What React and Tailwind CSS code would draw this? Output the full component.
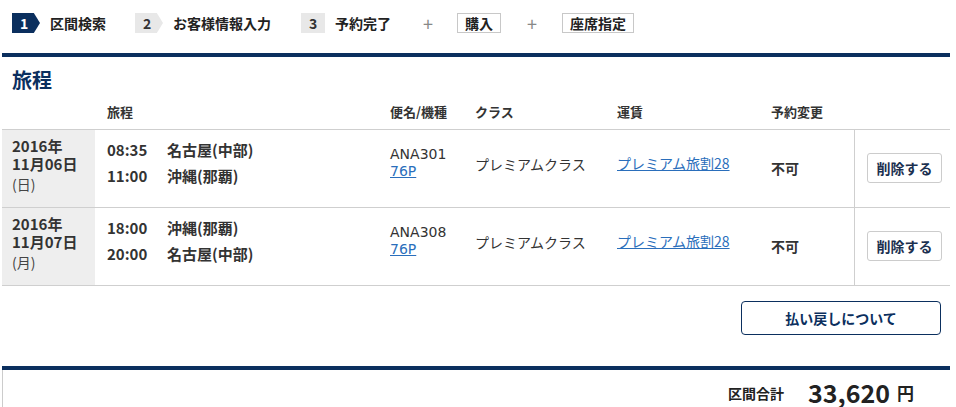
import React from 'react';

const ROWS = [
  {
    year: '2016年',
    date: '11月06日',
    dow: '(日)',
    legs: [
      ['08:35', '名古屋(中部)'],
      ['11:00', '沖縄(那覇)'],
    ],
    flight: 'ANA301',
  },
  {
    year: '2016年',
    date: '11月07日',
    dow: '(月)',
    legs: [
      ['18:00', '沖縄(那覇)'],
      ['20:00', '名古屋(中部)'],
    ],
    flight: 'ANA308',
  },
];

const GRID = 'grid grid-cols-[93px_295px_85px_142px_154px_83px_96px]';
const ARROW = '[clip-path:polygon(0_0,78%_0,100%_50%,78%_100%,0_100%)]';
const LATIN = "font-['DejaVu_Sans','Noto_Sans_CJK_JP',sans-serif]";

function Step({ n, label, active, arrow, className = '' }) {
  const tone = active ? 'bg-[#0b2f5e] text-white' : 'bg-[#e8e8e8] text-[#333]';
  return (
    <div className={`flex h-[20px] items-center ${className}`}>
      <span
        className={`flex h-[20px] items-center pl-[8px] text-[14px] font-bold leading-none ${tone} ${
          arrow ? `w-[28px] ${ARROW}` : 'w-[24px]'
        }`}
      >
        {n}
      </span>
      <span className="ml-[10px] text-[14px] font-bold leading-[20px] text-[#222]">{label}</span>
    </div>
  );
}

function Option({ label, className = '' }) {
  return (
    <span
      className={`flex h-[20px] items-center border border-[#c8c8c8] px-[7px] text-[14px] font-bold leading-none text-[#222] ${className}`}
    >
      {label}
    </span>
  );
}

function Plus({ className = '' }) {
  return <span className={`text-[18px] leading-[20px] text-[#888] ${className}`}>+</span>;
}

function ItineraryRow({ row }) {
  return (
    <div className={`${GRID} h-[78px] border-b border-[#cfcfcf] text-[#333]`}>
      <div className="bg-[#eeeeee] pl-[10px] pt-[7px]">
        <div className="h-[18px] text-[15px] font-bold leading-[18px]">{row.year}</div>
        <div className="h-[18px] text-[15px] font-bold leading-[18px]">{row.date}</div>
        <div className="mt-[2px] text-[14px] leading-[18px] text-[#444]">{row.dow}</div>
      </div>
      <div className="pl-[12px] pt-[7px]">
        {row.legs.map(([time, place]) => (
          <div key={time} className="flex h-[26px] items-center text-[15px] font-bold">
            <span className="w-[60px]">{time}</span>
            <span>{place}</span>
          </div>
        ))}
      </div>
      <div className={`pt-[16px] text-[14px] leading-[17px] ${LATIN}`}>
        <div>{row.flight}</div>
        <a href="#" className="text-[#2a6ebb] underline">
          76P
        </a>
      </div>
      <div className="pt-[24px] text-[14px] leading-[20px]">プレミアムクラス</div>
      <div className="pt-[23px] text-[14px] leading-[20px]">
        <a href="#" className="text-[#2a6ebb] underline">プレミアム旅割28</a>
      </div>
      <div className="pt-[28px] text-[14px] font-bold leading-[20px]">不可</div>
      <div className="border-l border-[#cfcfcf] pl-[12px] pt-[23px]">
        <button
          type="button"
          className="h-[30px] w-[75px] rounded-[3px] border border-[#cccccc] bg-white text-[14px] font-bold text-[#1b3050]"
        >
          削除する
        </button>
      </div>
    </div>
  );
}

export default function App() {
  return (
    <div className="min-h-[407px] bg-white font-['Noto_Sans_CJK_JP',sans-serif] text-[#333]">
      <div className="ml-[2px] w-[948px]">
        <nav className="flex h-[20px] items-center pl-[10px] mt-[13px]">
          <Step n="1" label="区間検索" active arrow />
          <Step n="2" label="お客様情報入力" arrow className="ml-[29px]" />
          <Step n="3" label="予約完了" className="ml-[30px]" />
          <Plus className="ml-[32px]" />
          <Option label="購入" className="ml-[24px]" />
          <Plus className="ml-[26px]" />
          <Option label="座席指定" className="ml-[25px]" />
        </nav>

        <div className="mt-[20px] h-[4px] bg-[#0b2f5e]" />

        <h2 className="mt-[9px] pl-[10px] text-[20px] font-bold leading-[28px] text-[#0b2f5e]">旅程</h2>

        <div className={`${GRID} h-[36px] items-center border-b border-[#cfcfcf] text-[13px] font-bold text-[#333]`}>
          <span />
          <span className="pl-[12px]">旅程</span>
          <span>便名/機種</span>
          <span>クラス</span>
          <span>運賃</span>
          <span>予約変更</span>
          <span />
        </div>

        {ROWS.map((row) => (
          <ItineraryRow key={row.date} row={row} />
        ))}

        <div className="flex justify-end pr-[9px] pt-[15px]">
          <button
            type="button"
            className="h-[34px] w-[200px] rounded-[4px] border border-[#0b2f5e] bg-white text-[14px] font-bold text-[#0b2f5e]"
          >
            払い戻しについて
          </button>
        </div>

        <div className="mt-[31px] h-[4px] bg-[#0b2f5e]" />

        <div className="flex h-[37px] items-center justify-end border-l border-[#cccccc] pr-[36px] pt-[6px]">
          <span className="mt-[2px] text-[14px] font-bold leading-[20px] text-[#222]">区間合計</span>
          <span className="ml-[24px] text-[25px] font-bold leading-[28px] text-[#222]">33,620</span>
          <span className="ml-[7px] mt-[3px] text-[17px] font-bold leading-[20px] text-[#222]">円</span>
        </div>
      </div>
    </div>
  );
}
